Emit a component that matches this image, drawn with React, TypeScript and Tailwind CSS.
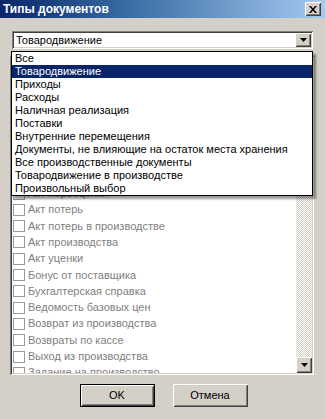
import React from 'react'

const raised =
  'shadow-[inset_1px_1px_#ffffff,inset_-1px_-1px_#404040,inset_2px_2px_#d4d0c8,inset_-2px_-2px_#808080]'
const sunken =
  'shadow-[inset_1px_1px_#808080,inset_-1px_-1px_#ffffff,inset_2px_2px_#404040,inset_-2px_-2px_#d4d0c8]'

const options = [
  'Все',
  'Товародвижение',
  'Приходы',
  'Расходы',
  'Наличная реализация',
  'Поставки',
  'Внутренние перемещения',
  'Документы, не влияющие на остаток места хранения',
  'Все производственные документы',
  'Товародвижение в производстве',
  'Произвольный выбор',
]

const docs = [
  'Авансовый отчет',
  'Акт выполненных работ',
  'Акт инвентаризации',
  'Акт комплектации',
  'Акт на списание',
  'Акт недостачи',
  'Акт пересортицы',
  'Акт переработки',
  'Акт переоценки',
  'Акт потерь',
  'Акт потерь в производстве',
  'Акт производства',
  'Акт уценки',
  'Бонус от поставщика',
  'Бухгалтерская справка',
  'Ведомость базовых цен',
  'Возврат из производства',
  'Возвраты по кассе',
  'Выход из производства',
  'Задание на производство',
]

function DownArrow() {
  return (
    <svg width="7" height="4" viewBox="0 0 7 4">
      <path d="M0 0h7L3.5 4z" fill="#000" />
    </svg>
  )
}

export default function App() {
  const selected = 1

  return (
    <div className="relative w-[325px] h-[419px] overflow-hidden bg-[#d4d0c8] font-['Liberation_Sans',Arial,sans-serif] text-[11px] text-black">
      {/* title bar */}
      <div className="h-[18px] flex items-center justify-between pl-[3px] pr-[4px] bg-linear-to-r from-[#0a246a] via-[#3a6ea5] via-40% to-[#a6caf0]">
        <span className="text-white font-bold text-[12px] leading-none">Типы документов</span>
        <div className={`w-[16px] h-[14px] bg-[#d4d0c8] flex items-center justify-center ${raised}`}>
          <svg width="8" height="7" viewBox="0 0 8 7">
            <path d="M0 0h2l2 2.5L6 0h2L5 3.5 8 7H6L4 4.5 2 7H0l3-3.5z" fill="#000" />
          </svg>
        </div>
      </div>

      <div className="px-[12px] pt-[13px]">
        {/* combo */}
        <div className={`h-[18px] bg-white flex items-center justify-between ${sunken}`}>
          <span className="pl-[4px] leading-none">{options[selected]}</span>
          <div className={`w-[16px] h-[14px] mr-[2px] bg-[#d4d0c8] flex items-center justify-center ${raised}`}>
            <DownArrow />
          </div>
        </div>

        {/* checklist */}
        <div className={`-ml-[2px] mr-[-1px] mt-[7px] h-[319px] bg-white flex p-[2px] ${sunken}`}>
          <div className="flex-1 overflow-hidden flex flex-col justify-end text-[#808080]">
            <div className="shrink-0 -mb-[8px]">
              {docs.map(d => (
                <div key={d} className="h-[16.3px] flex items-center gap-[3px] pl-[1px]">
                  <span className="w-[12px] h-[12px] border border-[#9a9a9a] bg-white shrink-0" />
                  <span className="whitespace-nowrap leading-none">{d}</span>
                </div>
              ))}
            </div>
          </div>
          <div className="w-[16px] flex flex-col bg-[repeating-conic-gradient(#d4d0c8_0%_25%,#ffffff_0%_50%)] bg-[length:2px_2px]">
            <div className="flex-1" />
            <div className={`h-[16px] bg-[#d4d0c8] flex items-center justify-center ${raised}`}>
              <DownArrow />
            </div>
          </div>
        </div>

        {/* buttons */}
        <div className="flex justify-center gap-[18px] mt-[9px] pl-[2px]">
          <div className="w-[75px] h-[23px] border border-black">
            <div className={`w-full h-full flex items-center justify-center ${raised}`}>OK</div>
          </div>
          <div className={`w-[75px] h-[23px] flex items-center justify-center ${raised}`}>Отмена</div>
        </div>
      </div>

      {/* open dropdown */}
      <div className="absolute left-[11px] top-[51px] w-[302px] bg-white border border-black shadow-[3px_3px_2px_rgba(0,0,0,0.4)]">
        {options.map((o, i) => (
          <div
            key={o}
            className={`h-[13px] leading-[13px] pl-[3px] whitespace-nowrap ${
              i === selected ? 'bg-[#0a246a] text-white' : ''
            }`}
          >
            {o}
          </div>
        ))}
      </div>
    </div>
  )
}
